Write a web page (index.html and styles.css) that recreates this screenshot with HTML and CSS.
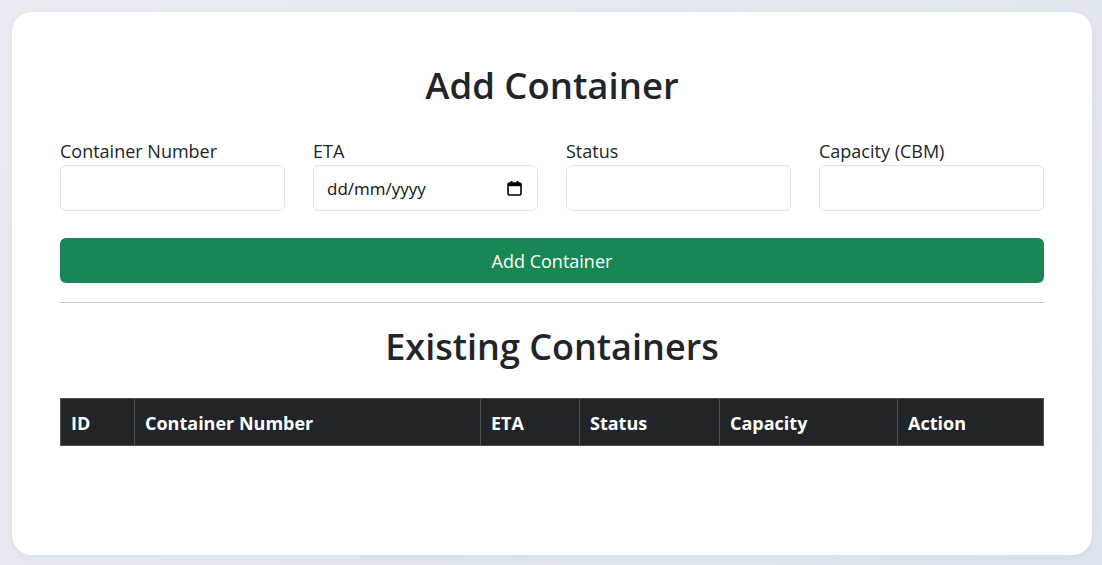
FILE: index.html
```html
<!DOCTYPE html>
<html lang="en-GB">
<head>
<meta charset="utf-8">
<title>Containers</title>
<link rel="stylesheet" href="styles.css">
</head>
<body>
  <main class="card">
    <h1 class="title">Add Container</h1>
    <form class="form">
      <div class="fields">
        <label class="field">
          <span class="field-label">Container Number</span>
          <input class="input" type="text">
        </label>
        <label class="field">
          <span class="field-label">ETA</span>
          <span class="date-wrap">
            <input class="input input-date" type="text" placeholder="dd/mm/yyyy">
            <svg class="cal-icon" width="15" height="16" viewBox="0 0 15 16" aria-hidden="true">
              <rect x="1" y="3" width="13" height="12" rx="1.5" fill="none" stroke="#000" stroke-width="1.6"/>
              <rect x="1" y="3" width="13" height="3.2" fill="#000"/>
              <rect x="3.6" y="1" width="1.8" height="3" fill="#000"/>
              <rect x="9.6" y="1" width="1.8" height="3" fill="#000"/>
            </svg>
          </span>
        </label>
        <label class="field">
          <span class="field-label">Status</span>
          <input class="input" type="text">
        </label>
        <label class="field">
          <span class="field-label">Capacity (CBM)</span>
          <input class="input" type="text">
        </label>
      </div>
      <button class="btn" type="button">Add Container</button>
    </form>
    <hr class="divider">
    <h2 class="subtitle">Existing Containers</h2>
    <table class="table">
      <thead>
        <tr>
          <th class="col-id">ID</th>
          <th class="col-num">Container Number</th>
          <th class="col-eta">ETA</th>
          <th class="col-status">Status</th>
          <th class="col-cap">Capacity</th>
          <th class="col-act">Action</th>
        </tr>
      </thead>
      <tbody></tbody>
    </table>
  </main>
</body>
</html>
```

FILE: styles.css
```css
* { box-sizing: border-box; }

html, body { height: 100%; }

body {
  margin: 0;
  padding: 12px 10px 10px 12px;
  background: linear-gradient(135deg, #e9edf3 0%, #dfe5ee 100%);
  font-family: "Open Sans", "Noto Sans", sans-serif;
  color: #212529;
}

.card {
  background: #fff;
  border-radius: 20px;
  height: 543px;
  padding: 48px 48px;
  box-shadow: 0 2px 10px rgba(30, 40, 70, 0.06);
}

.title {
  margin: 3px 0 0;
  text-align: center;
  font-size: 36.5px;
  font-weight: 600;
  line-height: 44px;
}

.form { margin-top: 32px; }

.fields {
  display: grid;
  grid-template-columns: repeat(4, minmax(0, 1fr));
  gap: 28px;
}

.field { display: flex; flex-direction: column; min-width: 0; }

.field-label {
  font-size: 18px;
  line-height: 24px;
  margin-bottom: 2px;
}

.input {
  width: 100%;
  height: 46px;
  border: 1px solid #dee2e6;
  border-radius: 6px;
  padding: 6px 12px;
  font-family: inherit;
  font-size: 18px;
  color: #212529;
  background: #fff;
}

.date-wrap { position: relative; display: block; }

.input-date { font-size: 17px; padding-left: 13px; }

.input-date::placeholder { color: #111; opacity: 1; }

.cal-icon {
  position: absolute;
  right: 16px;
  top: 15px;
  pointer-events: none;
}

.btn {
  display: block;
  width: 100%;
  height: 45px;
  margin-top: 27px;
  border: 0;
  border-radius: 6px;
  background: #198754;
  color: #fff;
  font-family: inherit;
  font-size: 18px;
}

.divider {
  margin: 19px 0 0;
  border: 0;
  border-top: 1px solid #c8c8c8;
}

.subtitle {
  margin: 22px 0 0;
  text-align: center;
  font-size: 36px;
  font-weight: 600;
  line-height: 43px;
}

.table {
  width: 100%;
  margin-top: 30px;
  border-collapse: collapse;
}

.table th {
  height: 47px;
  padding: 1px 10px 0;
  background: #212529;
  color: #fff;
  text-align: left;
  font-size: 18px;
  font-weight: 700;
  border: 1px solid #4d5154;
}

.col-id { width: 74px; }
.col-num { width: 346px; }
.col-eta { width: 99px; }
.col-status { width: 140px; }
.col-cap { width: 178px; }
```
